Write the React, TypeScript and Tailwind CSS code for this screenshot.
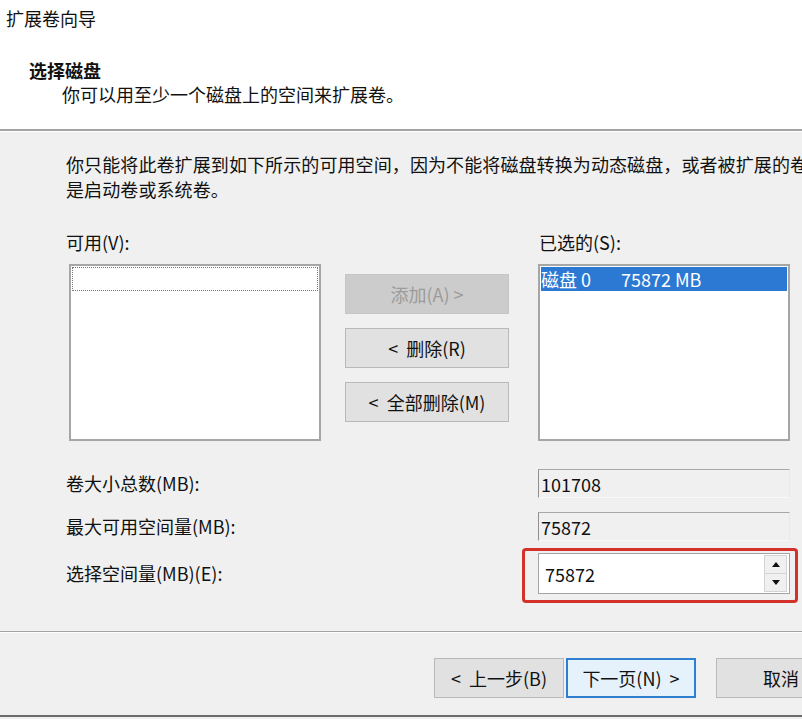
/**
 * 扩展卷向导 - 选择磁盘页
 * 窗口比截图宽、右侧内容被裁掉，所以内部按原宽度排版、外层 overflow-hidden
 */

const FONT = "font-['Noto_Sans_CJK_SC','Noto_Sans',sans-serif]";

// 普通按钮（Win10 风格：浅灰底 + 灰边）
const Btn = ({
  children,
  disabled,
  focused,
  className = "",
}: {
  children: React.ReactNode;
  disabled?: boolean;
  focused?: boolean;
  className?: string;
}) => (
  <div
    className={[
      "flex h-[40px] shrink-0 items-center justify-center whitespace-pre text-[18px] leading-none",
      disabled
        ? "border border-[#c6c6c6] bg-[#cccccc] text-[#9b9b9b]"
        : focused
          ? "border-2 border-[#2f7fd0] bg-[#e5f1fb] text-[#111]"
          : "border border-[#b9b9b9] bg-[#e1e1e1] text-[#111]",
      className,
    ].join(" ")}
  >
    {children}
  </div>
);

// 只读数值框：凹陷边框、底色与面板相同
const ReadOnlyField = ({ value }: { value: string }) => (
  <div className="flex h-[29px] w-[252px] items-center border-t border-l border-t-[#a8a8a8] border-l-[#8f8f8f] border-b border-r border-b-[#fafafa] border-r-[#e8e8e8] pl-[2px] text-[18px] leading-none text-[#111]">
    {value}
  </div>
);

const Triangle = ({ up }: { up?: boolean }) => (
  <svg width="8" height="5" viewBox="0 0 8 5">
    <path d={up ? "M0 5 L4 0 L8 5 Z" : "M0 0 L8 0 L4 5 Z"} fill="#111" />
  </svg>
);

export default function App() {
  return (
    <div
      className={`relative flex h-[719px] w-[802px] flex-col overflow-hidden bg-[#f0f0f0] text-[#111] ${FONT}`}
    >
      {/* 顶部白色标题区 */}
      <div className="flex h-[129px] shrink-0 flex-col bg-white">
        <div className="pl-[6px] pt-[6px] text-[18px] leading-[25px]">
          扩展卷向导
        </div>
        <div className="mt-[27px] pl-[29px] text-[18px] font-bold leading-[25px]">
          选择磁盘
        </div>
        <div className="mt-[-1px] pl-[62px] text-[18px] leading-[25px]">
          你可以用至少一个磁盘上的空间来扩展卷。
        </div>
      </div>
      <div className="h-[2px] shrink-0 bg-[#a3a3a3]" />
      <div className="h-px shrink-0 bg-white" />

      {/* 主体 */}
      <div className="flex flex-col pl-[66px] pt-[20px]">
        <p className="whitespace-nowrap text-[18px] leading-[25px] tracking-[0.1px]">
          你只能将此卷扩展到如下所示的可用空间，因为不能将磁盘转换为动态磁盘，或者被扩展的卷
          <br />
          是启动卷或系统卷。
        </p>

        {/* 可用 / 已选 列表 */}
        <div className="mt-[28px] flex">
          <div className="flex w-[254px] flex-col">
            <div className="text-[18px] leading-[25px]">可用(V):</div>
            <div className="ml-[3px] mt-[9px] h-[177px] w-[252px] border-2 border-[#a6a6a6] bg-white p-px">
              <div className="h-[24px] w-full border border-dotted border-[#777]" />
            </div>
          </div>

          <div className="ml-[25px] mt-[44px] flex w-[164px] flex-col gap-[14px]">
            <Btn disabled>添加(A) &gt;</Btn>
            <Btn>&lt;  删除(R)</Btn>
            <Btn>&lt;  全部删除(M)</Btn>
          </div>

          <div className="ml-[29px] flex flex-col">
            <div className="ml-px text-[18px] leading-[25px]">已选的(S):</div>
            <div className="mt-[9px] h-[177px] w-[252px] border-2 border-[#a6a6a6] bg-white p-px">
              <div className="flex h-[24px] items-center bg-[#2b79d3] text-[18px] leading-none text-white">
                <span className="w-[80px]">磁盘 0</span>
                <span>75872 MB</span>
              </div>
            </div>
          </div>
        </div>

        {/* 数值行 */}
        <div className="mt-[28px] flex items-center">
          <div className="w-[472px] text-[18px] leading-[25px]">卷大小总数(MB):</div>
          <ReadOnlyField value="101708" />
        </div>
        <div className="mt-[14px] flex items-center">
          <div className="w-[472px] text-[18px] leading-[25px]">最大可用空间量(MB):</div>
          <ReadOnlyField value="75872" />
        </div>
        <div className="mt-[12px] flex items-center">
          <div className="w-[472px] text-[18px] leading-[25px]">选择空间量(MB)(E):</div>
          <div className="relative flex h-[41px] w-[252px] items-center border border-[#a3a3a3] bg-white">
            <span className="flex-1 pl-[6px] text-[18px] leading-none">75872</span>
            <div className="mr-[2px] flex h-[37px] w-[23px] flex-col">
              <div className="flex flex-1 items-center justify-center border border-[#d4d4d4] bg-[#f0f0f0]">
                <Triangle up />
              </div>
              <div className="flex flex-1 items-center justify-center border border-t-0 border-[#d4d4d4] bg-[#f0f0f0]">
                <Triangle />
              </div>
            </div>
            {/* 红色标注框 */}
            <div className="pointer-events-none absolute -bottom-[10px] -left-[17px] -right-[9px] -top-[6px] rounded-[4px] border-[3px] border-[#d3322a]" />
          </div>
        </div>
      </div>

      {/* 底部按钮区 */}
      <div className="mt-[37px] h-px shrink-0 bg-[#a3a3a3]" />
      <div className="h-px shrink-0 bg-white" />
      <div className="mt-[25px] flex pl-[434px]">
        <Btn className="w-[130px]">&lt;  上一步(B)</Btn>
        <Btn focused className="ml-[2px] w-[130px]">
          下一页(N)  &gt;
        </Btn>
        <Btn className="ml-[20px] w-[130px]">取消</Btn>
      </div>
      <div className="flex-1" />
      <div className="mb-[2px] h-[2px] shrink-0 bg-[#6b6b6b]" />
    </div>
  );
}
